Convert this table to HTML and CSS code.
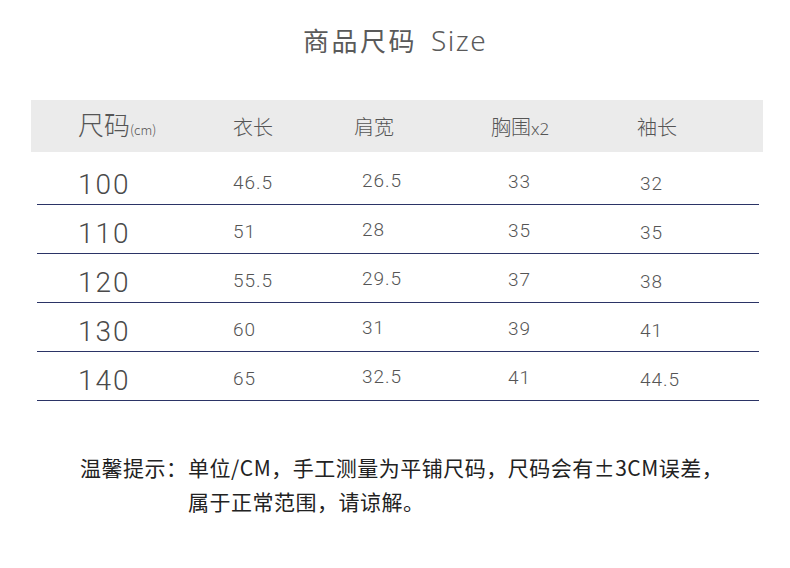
FILE: index.html
```html
<!DOCTYPE html>
<html lang="zh-CN">
<head>
<meta charset="utf-8">
<title>商品尺码 Size</title>
<link rel="stylesheet" href="styles.css">
</head>
<body>
<div class="page">
  <h1 class="title"><span class="title-cn">商品尺码</span><span class="title-en">Size</span></h1>
  <div class="chart">
    <div class="row head">
      <div class="c c1">尺码<small class="unit">(cm)</small></div>
      <div class="c">衣长</div>
      <div class="c">肩宽</div>
      <div class="c">胸围<span class="x2">x2</span></div>
      <div class="c">袖长</div>
    </div>
    <div class="row body first">
      <div class="c c1">100</div><div class="c c2">46.5</div><div class="c c3">26.5</div><div class="c c4">33</div><div class="c c5">32</div>
    </div>
    <div class="row body">
      <div class="c c1">110</div><div class="c c2">51</div><div class="c c3">28</div><div class="c c4">35</div><div class="c c5">35</div>
    </div>
    <div class="row body">
      <div class="c c1">120</div><div class="c c2">55.5</div><div class="c c3">29.5</div><div class="c c4">37</div><div class="c c5">38</div>
    </div>
    <div class="row body">
      <div class="c c1">130</div><div class="c c2">60</div><div class="c c3">31</div><div class="c c4">39</div><div class="c c5">41</div>
    </div>
    <div class="row body">
      <div class="c c1">140</div><div class="c c2">65</div><div class="c c3">32.5</div><div class="c c4">41</div><div class="c c5">44.5</div>
    </div>
  </div>
  <div class="note">
    <div class="note-label">温馨提示：</div>
    <div class="note-text">单位/CM，手工测量为平铺尺码，尺码会有±3CM误差，<br>属于正常范围，请谅解。</div>
  </div>
</div>
</body>
</html>
```

FILE: styles.css
```css
html, body {
  margin: 0;
  padding: 0;
  background: #ffffff;
}
.page {
  width: 790px;
  height: 568px;
  font-family: "Noto Sans CJK SC", "Noto Sans", sans-serif;
  color: #555;
  overflow: hidden;
}
.title {
  margin: 27px 0 0;
  text-align: center;
  font-size: 26px;
  line-height: 26px;
  font-weight: 400;
  color: #5a5a5a;
}
.title-cn {
  letter-spacing: 2.5px;
}
.title-en {
  margin-left: 14px;
  font-family: "Noto Sans", sans-serif;
  font-size: 28px;
  font-weight: 300;
  letter-spacing: 1.5px;
}
.chart {
  margin: 47px 27px 0 31px;
}
.row {
  display: grid;
  grid-template-columns: 155px 121px 137px 146px 1fr;
}
.head {
  height: 52px;
  padding-left: 47px;
  background: #ebebeb;
  align-items: center;
  font-size: 20px;
  font-weight: 300;
  color: #555;
}
.head .c1 {
  font-size: 26px;
  line-height: 26px;
  margin-top: 2px;
}
.unit {
  font-size: 13px;
  letter-spacing: 0;
}
.x2 {
  font-family: "Noto Sans", sans-serif;
  font-size: 17px;
}
.body {
  height: 48px;
  margin: 0 4px 0 6px;
  padding-left: 41px;
  border-bottom: 1px solid #2b3466;
  align-items: end;
  font-family: Roboto, "Noto Sans", sans-serif;
  font-weight: 300;
  font-size: 19px;
  line-height: 19px;
  color: #555;
  letter-spacing: 1px;
}
.body.first {
  height: 52px;
}
.body .c {
  padding-bottom: 12px;
}
.body .c1 {
  font-size: 28px;
  line-height: 28px;
  letter-spacing: 2px;
  padding-bottom: 5px;
  color: #4a4a4a;
}
.body .c3 {
  padding-left: 8px;
  padding-bottom: 14px;
}
.body .c4 {
  padding-left: 17px;
  padding-bottom: 13px;
}
.body .c5 {
  padding-left: 3px;
  padding-bottom: 11px;
}
.note {
  display: flex;
  margin: 49px 0 0 80px;
  font-size: 21px;
  line-height: 34px;
  letter-spacing: 0.5px;
  color: #222;
}
.note-label {
  width: 108px;
  flex: none;
}
.note-text {
  margin-left: 0;
}
```
